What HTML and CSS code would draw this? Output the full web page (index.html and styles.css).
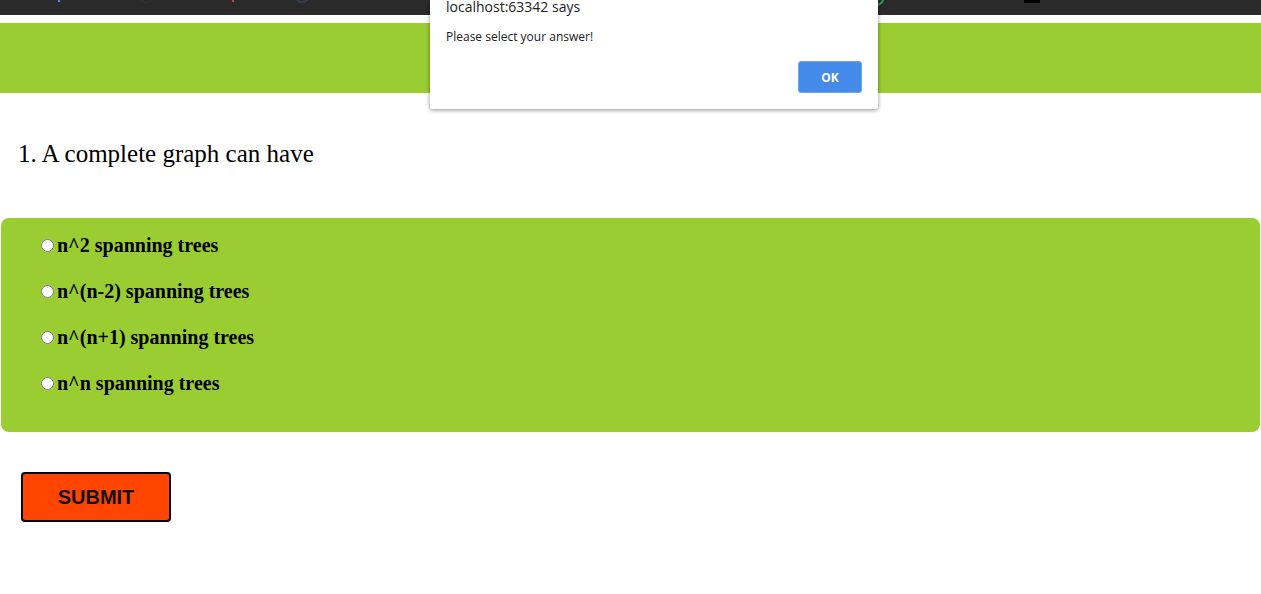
FILE: index.html
```html
<!DOCTYPE html>
<html>
<head>
<meta charset="utf-8">
<title>Quiz</title>
<link rel="stylesheet" href="styles.css">
</head>
<body>
<div class="chrome">
  <span class="mark mark-a"></span>
  <span class="mark mark-b"></span>
  <span class="mark mark-c"></span>
  <span class="mark mark-d"></span>
  <span class="mark mark-e"></span>
  <span class="mark mark-f"></span>
</div>
<div class="header"></div>
<div class="question">1. A complete graph can have</div>
<div class="options">
  <label class="option"><input type="radio" name="q1">n^2 spanning trees</label>
  <label class="option"><input type="radio" name="q1">n^(n-2) spanning trees</label>
  <label class="option"><input type="radio" name="q1">n^(n+1) spanning trees</label>
  <label class="option"><input type="radio" name="q1">n^n spanning trees</label>
</div>
<div class="actions">
  <button class="submit" type="button">SUBMIT</button>
</div>

<div class="dialog">
  <div class="dialog-title">localhost:63342 says</div>
  <div class="dialog-msg">Please select your answer!</div>
  <div class="dialog-actions">
    <button class="ok" type="button">OK</button>
  </div>
</div>
</body>
</html>
```
FILE: styles.css
```css
html, body {
  margin: 0;
  padding: 0;
  background: #ffffff;
}
body {
  position: relative;
  font-family: "Liberation Serif", "Times New Roman", serif;
  color: #000;
}
.chrome {
  position: relative;
  height: 15px;
  background: #2a2a2a;
  margin-bottom: 8px;
}
.mark {
  position: absolute;
  display: block;
}
.mark-a { left: 58px; top: 0; width: 2px; height: 2px; background: #4a8ff0; }
.mark-b { left: 140px; top: -9px; width: 12px; height: 10px; border-radius: 50%; border: 1px solid #333; }
.mark-c { left: 232px; top: 0; width: 2px; height: 2px; background: #d04040; }
.mark-d { left: 294px; top: -11px; width: 12px; height: 10px; border-radius: 50%; border: 2px solid #353d52; }
.mark-e { left: 868px; top: -8px; width: 12px; height: 10px; border-radius: 50%; border: 2px solid #2e9b4a; }
.mark-f { left: 1024px; top: 0; width: 16px; height: 3px; background: #000; }

.header {
  height: 70px;
  background: #9acd32;
}
.question {
  margin: 47px 0 0 18px;
  font-size: 25px;
  line-height: 28px;
}
.options {
  margin: 50px 1px 0 1px;
  background: #9acd32;
  border-radius: 8px;
  padding: 16px 0 37px 35px;
  display: flex;
  flex-direction: column;
  gap: 23px;
}
.option {
  display: block;
  font-weight: bold;
  font-size: 20px;
  line-height: 23px;
  height: 23px;
}
.option input {
  margin: 3px 3px 0 5px;
  width: 13px;
  height: 13px;
}
.actions {
  margin: 40px 0 0 21px;
}
.submit {
  width: 150px;
  height: 50px;
  background: #ff4500;
  border: 2px solid #000;
  border-radius: 4px;
  font-family: "Liberation Sans", Arial, sans-serif;
  font-weight: bold;
  font-size: 20px;
  color: #111;
  padding: 0;
}

.dialog {
  position: absolute;
  left: 430px;
  top: 0;
  width: 448px;
  height: 109px;
  box-sizing: border-box;
  background: #fff;
  border-radius: 0 0 2px 2px;
  box-shadow: 0 1px 4px rgba(0,0,0,0.45);
  padding: 0 16px 0 16px;
  font-family: "Open Sans", "Segoe UI", sans-serif;
  color: #222;
}
.dialog-title {
  font-size: 14px;
  line-height: 16px;
  margin-top: -1px;
}
.dialog-msg {
  font-size: 12px;
  line-height: 16px;
  margin-top: 14px;
  color: #202020;
}
.dialog-actions {
  display: flex;
  justify-content: flex-end;
  margin-top: 16px;
}
.ok {
  width: 64px;
  height: 32px;
  background: #438ae9;
  border: 1px solid #6fa6f0;
  border-radius: 3px;
  color: #fff;
  font-family: "Open Sans", "Segoe UI", sans-serif;
  font-weight: bold;
  font-size: 12px;
  padding: 0;
}
```
